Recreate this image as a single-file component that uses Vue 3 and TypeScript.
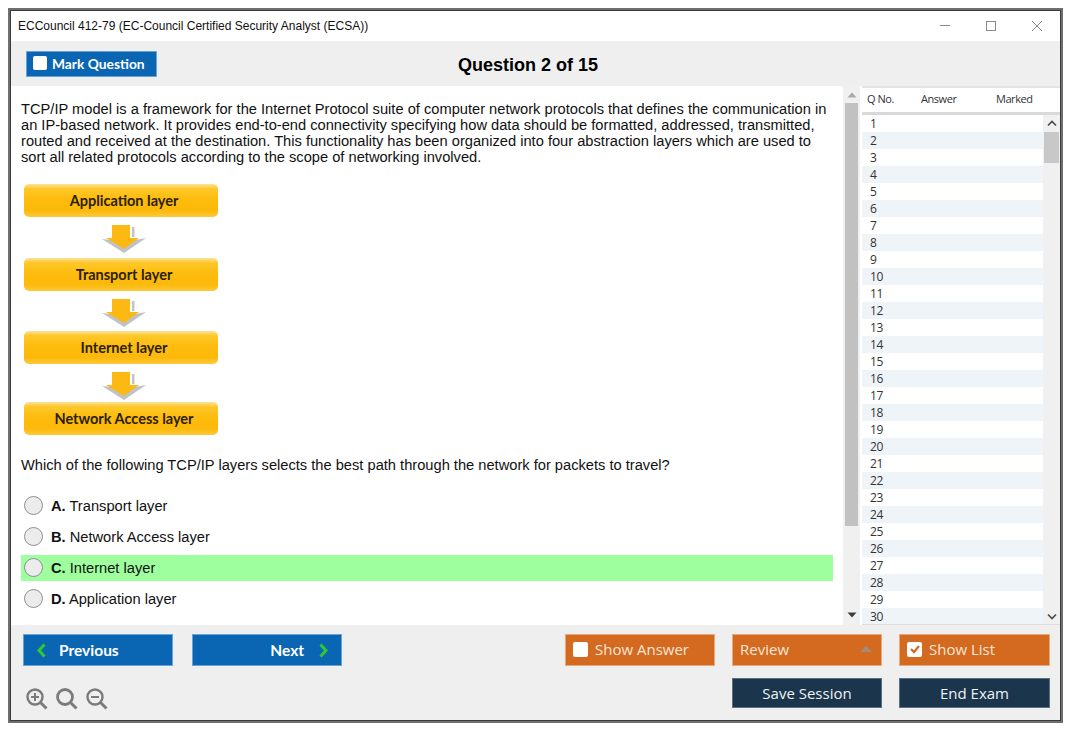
<script setup lang="ts">
const layers: { name: string; gap: number }[] = [
  { name: 'Application layer', gap: 41 },
  { name: 'Transport layer', gap: 40 },
  { name: 'Internet layer', gap: 38 },
  { name: 'Network Access layer', gap: 0 },
]
const options: { key: string; text: string; correct: boolean }[] = [
  { key: 'A.', text: 'Transport layer', correct: false },
  { key: 'B.', text: 'Network Access layer', correct: false },
  { key: 'C.', text: 'Internet layer', correct: true },
  { key: 'D.', text: 'Application layer', correct: false },
]
const rows: number[] = Array.from({ length: 30 }, (_, i) => i + 1)
</script>

<template>
  <div class="frame">
    <div class="window">
      <header class="titlebar">
        <span class="app-title">ECCouncil 412-79 (EC-Council Certified Security Analyst (ECSA))</span>
        <div class="win-controls">
          <svg width="12" height="12" viewBox="0 0 12 12"><path d="M1 5.5h10" stroke="#8a8a8a" fill="none" /></svg>
          <svg width="12" height="12" viewBox="0 0 12 12"><rect x="1.5" y="1.5" width="9" height="9" stroke="#8a8a8a" fill="none" /></svg>
          <svg width="12" height="12" viewBox="0 0 12 12"><path d="M1 1l10 10M11 1L1 11" stroke="#8a8a8a" fill="none" /></svg>
        </div>
      </header>

      <div class="toolbar">
        <button class="btn blue mark"><span class="check"></span>Mark Question</button>
        <h1 class="q-count">Question 2 of 15</h1>
      </div>

      <main class="content">
        <section class="pane">
          <p class="stem">TCP/IP model is a framework for the Internet Protocol suite of computer network protocols that defines the communication in<br />an IP-based network. It provides end-to-end connectivity specifying how data should be formatted, addressed, transmitted,<br />routed and received at the destination. This functionality has been organized into four abstraction layers which are used to<br />sort all related protocols according to the scope of networking involved.</p>

          <div class="diagram">
            <template v-for="l in layers" :key="l.name">
              <div class="layer">{{ l.name }}</div>
              <div v-if="l.gap" class="arrow" :style="{ height: l.gap + 'px' }">
                <svg width="46" height="30" viewBox="0 0 46 30">
                  <path d="M1 15L23 29 45 14 34 16 23 23 10 16z" fill="#bfc2c7" />
                  <path d="M11 1H29V14H38L23 25 5 14H11z" fill="#fdb913" />
                  <path d="M31 3h2.5v10H31z" fill="#c4c4c4" />
                </svg>
              </div>
            </template>
          </div>

          <p class="ask">Which of the following TCP/IP layers selects the best path through the network for packets to travel?</p>

          <ul class="options">
            <li v-for="o in options" :key="o.key" class="option" :class="{ correct: o.correct }">
              <span class="radio"></span>
              <span><b>{{ o.key }}</b> {{ o.text }}</span>
            </li>
          </ul>
        </section>

        <div class="vbar">
          <svg class="arr" width="10" height="6" viewBox="0 0 10 6"><path d="M5 0.5L9.5 5.5H0.5z" fill="#a8a8a8" /></svg>
          <div class="vthumb"></div>
          <svg class="arr" width="10" height="6" viewBox="0 0 10 6"><path d="M5 5.5L9.5 0.5H0.5z" fill="#3c3c3c" /></svg>
        </div>

        <aside class="list">
          <div class="list-head">
            <span>Q No.</span><span>Answer</span><span>Marked</span>
          </div>
          <div class="list-body">
            <div class="rows">
              <div v-for="n in rows" :key="n" class="row">{{ n }}</div>
            </div>
            <div class="ibar">
              <svg class="chev" width="10" height="7" viewBox="0 0 10 7"><path d="M1 5.5l4-4 4 4" stroke="#4a4a4a" stroke-width="1.6" fill="none" /></svg>
              <div class="ithumb"></div>
              <svg class="chev" width="10" height="7" viewBox="0 0 10 7"><path d="M1 1.5l4 4 4-4" stroke="#4a4a4a" stroke-width="1.6" fill="none" /></svg>
            </div>
          </div>
        </aside>
      </main>

      <footer class="footer">
        <div class="foot-row top">
          <div class="nav-group">
            <button class="btn blue nav prev">
              <svg width="11" height="15" viewBox="0 0 11 15"><path d="M8.5 1.5L3 7.5l5.5 6" stroke="#2ecb2e" stroke-width="3" fill="none" /></svg>
              Previous
            </button>
            <button class="btn blue nav next">
              Next
              <svg width="11" height="15" viewBox="0 0 11 15"><path d="M2.5 1.5L8 7.5l-5.5 6" stroke="#2ecb2e" stroke-width="3" fill="none" /></svg>
            </button>
          </div>
          <span class="spacer"></span>
          <button class="btn orange"><span class="check"></span>Show Answer</button>
          <button class="btn orange review">Review
            <svg width="12" height="6" viewBox="0 0 12 6"><path d="M6 0l6 6H0z" fill="#a48a78" /></svg>
          </button>
          <button class="btn orange wide">
            <span class="check">
              <svg width="14" height="14" viewBox="0 0 14 14"><path d="M3 7l3 3 5-6" stroke="#d2691e" stroke-width="2.2" fill="none" /></svg>
            </span>Show List
          </button>
        </div>
        <div class="foot-row bottom">
          <div class="zoom">
            <svg width="22" height="22" viewBox="0 0 22 22"><circle cx="9" cy="9" r="7.5" stroke="#7b7b7b" stroke-width="2.4" fill="none" /><path d="M14.5 14.5l6 6" stroke="#7b7b7b" stroke-width="3" /><path d="M5 9h8M9 5v8" stroke="#7b7b7b" stroke-width="2" /></svg>
            <svg width="22" height="22" viewBox="0 0 22 22"><circle cx="9" cy="9" r="7.5" stroke="#7b7b7b" stroke-width="2.8" fill="none" /><path d="M14.5 14.5l6 6" stroke="#7b7b7b" stroke-width="3" /></svg>
            <svg width="22" height="22" viewBox="0 0 22 22"><circle cx="9" cy="9" r="7.5" stroke="#7b7b7b" stroke-width="2.4" fill="none" /><path d="M14.5 14.5l6 6" stroke="#7b7b7b" stroke-width="3" /><path d="M5 9h8" stroke="#7b7b7b" stroke-width="2" /></svg>
          </div>
          <span class="spacer"></span>
          <button class="btn navy">Save Session</button>
          <button class="btn navy wide">End Exam</button>
        </div>
      </footer>
    </div>
  </div>
</template>

<style>
html, body { margin: 0; background: #fff; }
</style>

<style scoped>
* { box-sizing: border-box; }
.frame {
  margin: 8px 0 0 8px;
  width: 1055px;
  height: 715px;
  border: 2px solid #6f6f6f;
}
.window {
  height: 100%;
  border: 1px solid #3a3a3a;
  display: flex;
  flex-direction: column;
  background: #fff;
  font-family: "Liberation Sans", Arial, sans-serif;
  color: #111;
}
.titlebar {
  height: 30px;
  flex: none;
  display: flex;
  align-items: center;
  justify-content: space-between;
  padding: 0 12px 0 7px;
}
.app-title { font-size: 12px; }
.win-controls { display: flex; gap: 34px; align-items: center; padding-right: 5px; }
.win-controls svg { display: block; }
.toolbar {
  height: 45px;
  flex: none;
  display: flex;
  background: #efefef;
  padding: 10px 0 0 15px;
}
.btn {
  flex: none;
  font-family: Lato, sans-serif;
  color: #fff;
  height: 32px;
  width: 150px;
  padding: 0;
  display: flex;
  align-items: center;
  border: 1px solid transparent;
  font-size: 15px;
}
.wide { width: 151px; }
.blue { background: #0a66b3; border-color: #66a3d6; }
.orange {
  background: #d46a1f;
  border-color: #eaa97a;
  font-family: "Open Sans", sans-serif;
  font-size: 15px;
  padding: 0 0 2px 7px;
  color: #f6e6da;
}
.navy {
  background: #1b364c;
  border-color: #5b7183;
  justify-content: center;
  font-family: "Open Sans", sans-serif;
  font-size: 15px;
  height: 30px;
  padding-bottom: 1px;
  color: #eef2f5;
}
.check {
  width: 15px;
  height: 15px;
  background: #fff;
  border-radius: 2px;
  flex: none;
  margin-right: 7px;
  display: flex;
  align-items: center;
  justify-content: center;
}
.check svg { display: block; }
.mark {
  width: 131px;
  height: 26px;
  font-weight: 700;
  font-size: 13.8px;
  padding: 0 0 2px 6px;
}
.mark .check { width: 14px; height: 14px; margin-right: 5px; }
.q-count {
  margin: 3px 0 0 301px;
  font-size: 18px;
  line-height: 22px;
  font-weight: 700;
  color: #000;
}
.content {
  flex: 1;
  min-height: 0;
  display: flex;
}
.pane {
  width: 832px;
  flex: none;
  padding: 15px 10px 0;
  overflow: hidden;
}
.stem, .ask {
  margin: 0;
  font-size: 14.67px;
  line-height: 16px;
  white-space: nowrap;
}
.diagram {
  margin: 19px 0 0 3px;
  width: 194px;
  display: flex;
  flex-direction: column;
}
.layer {
  height: 33px;
  border-radius: 5px;
  background: linear-gradient(#fde39a 0, #fec82b 14%, #fdbc0e 45%, #fdb90a 80%, #fdc93c 100%);
  display: flex;
  align-items: center;
  justify-content: center;
  padding: 0 0 1px 6px;
  font-family: Lato, sans-serif;
  font-weight: 700;
  font-size: 14.5px;
  color: #2b2105;
}
.arrow {
  display: flex;
  justify-content: center;
  align-items: flex-start;
  padding: 7px 0 0 6px;
}
.ask { margin-top: 22px; }
.options {
  list-style: none;
  margin: 20px 0 0;
  padding: 0;
  display: flex;
  flex-direction: column;
  gap: 5px;
}
.option {
  height: 26px;
  display: flex;
  align-items: center;
  gap: 8px;
  padding-left: 3px;
  font-size: 14.67px;
}
.correct { background: #9eff9e; }
.radio {
  width: 19px;
  height: 19px;
  border-radius: 50%;
  border: 1.5px solid #8f8f8f;
  background: #ececec;
  flex: none;
  margin-top: -1px;
}
.vbar {
  width: 17px;
  flex: none;
  background: #f0f0f0;
  display: flex;
  flex-direction: column;
  align-items: center;
  justify-content: space-between;
  padding: 6px 0 7px;
}
.arr { display: block; flex: none; }
.vthumb {
  width: 13px;
  height: 423px;
  background: #c1c1c1;
  margin: 5px 0 auto;
}
.list {
  flex: 1;
  margin-left: 2px;
  min-width: 0;
  display: flex;
  flex-direction: column;
  overflow: hidden;
}
.list-head {
  height: 29px;
  flex: none;
  border-top: 2px solid #e4e4e4;
  border-bottom: 3px solid #d9d9d9;
  display: grid;
  grid-template-columns: 54px 75px 1fr;
  align-items: center;
  padding: 0 0 3px 5px;
  font-family: "Open Sans", sans-serif;
  font-size: 11px;
  letter-spacing: -0.45px;
  color: #333;
}
.list-body {
  flex: 1;
  min-height: 0;
  display: flex;
  border-bottom: 1px solid #dcdcdc;
}
.rows {
  width: 181px;
  flex: none;
  overflow: hidden;
}
.row {
  height: 17.03px;
  line-height: 17px;
  padding-left: 8px;
  font-family: "Open Sans", sans-serif;
  font-size: 12px;
  letter-spacing: -0.3px;
  color: #333;
  position: relative;
}
.row:nth-child(even) { background: #eff4f9; }
.ibar {
  flex: 1;
  background: #f0f0f0;
  display: flex;
  flex-direction: column;
  align-items: center;
  padding: 5px 0 4px;
}
.chev { display: block; flex: none; }
.ithumb {
  width: 15px;
  height: 31px;
  background: #c8c8c8;
  margin: 5px 0 auto;
}
.footer {
  height: 95px;
  flex: none;
  background: #efefef;
  padding: 9px 10px 0 12px;
}
.foot-row { display: flex; }
.spacer { flex: 1; }
.top { gap: 17px; }
.nav-group { display: flex; gap: 19px; }
.nav { font-weight: 700; font-size: 15.5px; }
.prev { padding-left: 12px; gap: 12px; }
.next { justify-content: flex-end; padding-right: 12px; gap: 14px; }
.review { justify-content: space-between; padding-right: 9px; }
.bottom { margin-top: 12px; gap: 17px; }
.zoom { display: flex; gap: 8px; margin: 10px 0 0 3px; }
.zoom svg { display: block; }
</style>
